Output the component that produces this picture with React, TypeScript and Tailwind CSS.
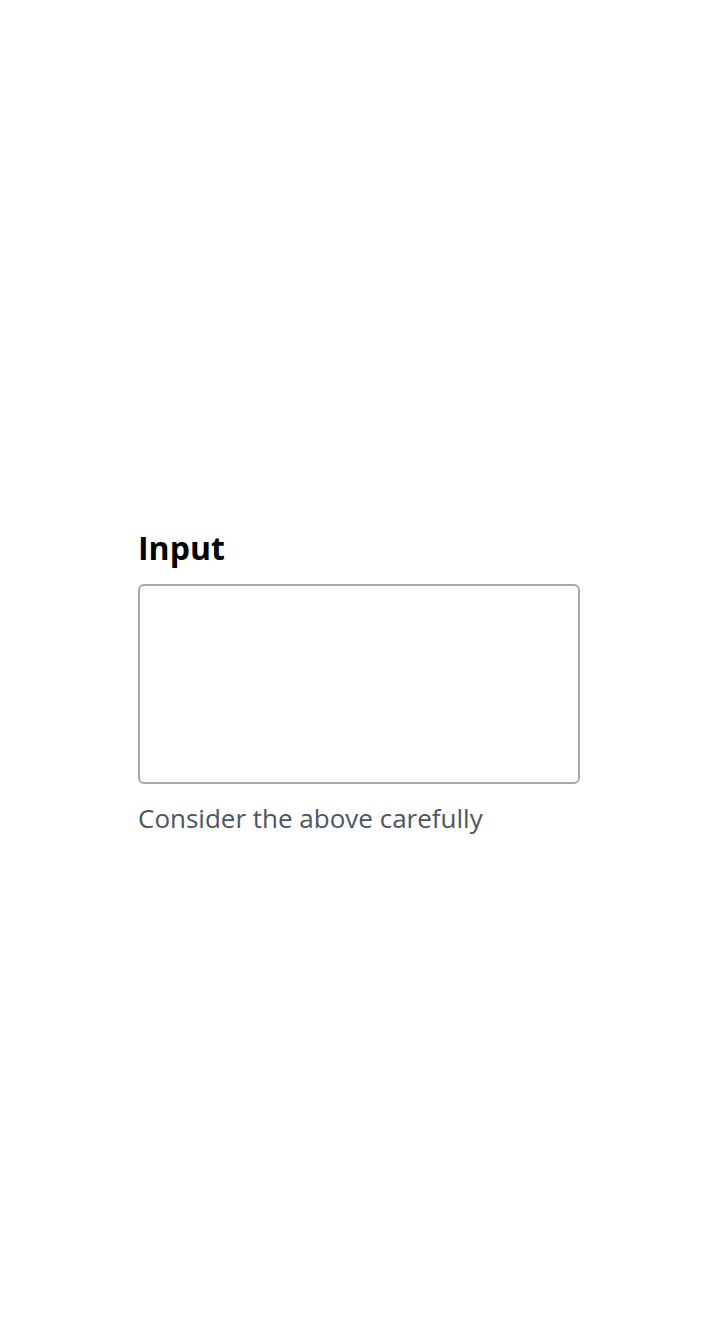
export default function App() {
  return (
    <main className="flex min-h-screen flex-col items-center justify-center bg-white px-8 pt-[26px] font-['Open_Sans',sans-serif]">
      <div className="flex w-full max-w-[442px] flex-col">
        <label htmlFor="input" className="mb-3 text-[32px] leading-12 font-bold text-black">
          Input
        </label>
        <textarea
          id="input"
          aria-describedby="input-help"
          className="h-[200px] w-full resize-none rounded-md border-2 border-[#a9a9a9] bg-white p-3 text-[26px] outline-none"
        />
        <p id="input-help" className="mt-4 text-[26px] leading-9 text-[#4b5563]">
          Consider the above carefully
        </p>
      </div>
    </main>
  );
}
